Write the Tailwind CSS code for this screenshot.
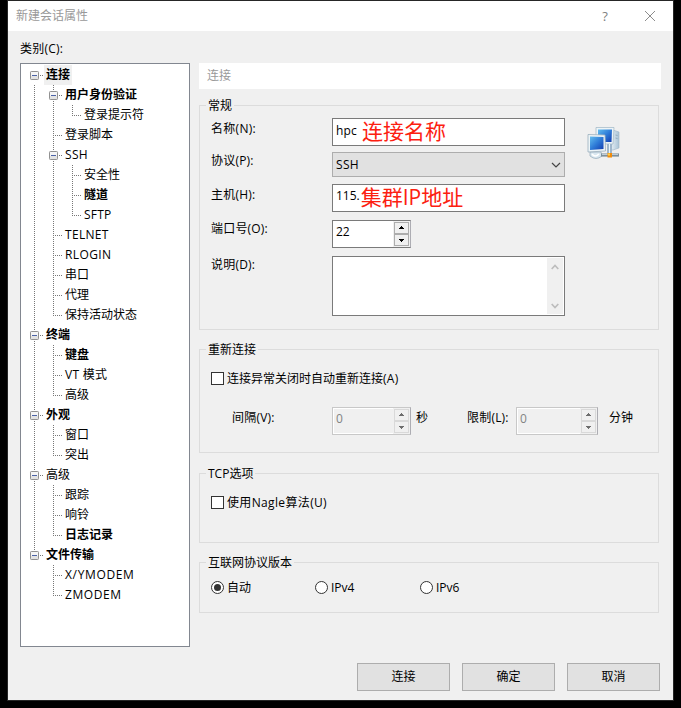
<!DOCTYPE html>
<html lang="zh-CN">
<head>
<meta charset="utf-8">
<title>新建会话属性</title>
<script src="https://cdn.jsdelivr.net/npm/@tailwindcss/browser@4"></script>
</head>
<body class="w-[681px] h-[708px] overflow-hidden bg-black pl-[7px] font-['Open_Sans','Noto_Sans_CJK_SC',sans-serif] text-[12px] leading-4 text-black">

<svg width="0" height="0" class="absolute">
  <defs>
    <g id="v"><path d="M7.5 0V20" stroke="#777" stroke-dasharray="1 1"/></g>
    <g id="t"><path d="M7.5 0V20M9 10.500H17" stroke="#777" stroke-dasharray="1 1"/></g>
    <g id="l"><path d="M7.5 0V11M9 10.500H17" stroke="#777" stroke-dasharray="1 1"/></g>
    <g id="box">
      <path d="M13 10.500H17" stroke="#777" stroke-dasharray="1 1"/>
      <rect x="3.500" y="6.500" width="8" height="8" rx=".8" fill="#f5f5f5" stroke="#919191"/>
      <rect x="4" y="11" width="7" height="3" fill="#e3e3e3"/>
      <path d="M5 10.500H10" stroke="#4b63a7"/>
    </g>
    <g id="up"><path d="M2 5h5v-1h-1v-1h-1v-1h-1v1h-1v1h-1z"/></g>
    <g id="down"><path d="M2 3h5v1h-1v1h-1v1h-1v-1h-1v-1h-1z"/></g>
  </defs>
</svg>

<main class="flex h-[701px] w-[667px] flex-col border border-[#262626] bg-[#f0f0f0]">
  <header class="flex h-[30px] shrink-0 items-center bg-white pl-2 text-[#999]">
    <h1 class="flex-1">新建会话属性</h1>
    <span class="mr-[35px] w-[8px] text-center text-[13px] text-[#808080]">?</span>
    <svg class="mr-[17px]" width="12" height="12" fill="none" stroke="#8c8c8c"><path d="M1 1L11 11M11 1L1 11"/></svg>
  </header>

  <div class="h-[32px] pt-[10px] pl-3 tracking-[0.2px]">类别(C):</div>

  <div class="flex h-[584px] pl-3">
    <nav id="tree" class="w-[170px] shrink-0 border border-[#828790] bg-white pt-px pl-[6px]"></nav>

    <section class="ml-[9px] w-[462px]">
      <div class="flex h-[26px] items-center bg-white pl-2 text-[#999]">连接</div>

      <div class="relative mt-4 flex h-[225px] w-[460px] border border-[#dcdcdc] pt-3 pl-[11px]">
        <span class="absolute -top-[8px] left-[6px] bg-[#f0f0f0] px-[2px]">常规</span>
        <div class="w-[354px]">
          <div class="mb-[6px] flex"><label class="w-[121px] pt-[3px] tracking-[0.3px]">名称(N):</label>
            <div class="flex h-7 w-[233px] items-center border border-[#7a7a7a] bg-white pl-[3px]"><span class="-mt-[3px] tracking-[0.2px]">hpc</span><span class="-mt-[2px] ml-[5px] text-[21px] leading-6 text-[#fc2010]">连接名称</span></div></div>
          <div class="mb-[7px] flex"><label class="w-[121px] pt-px tracking-[0.2px]">协议(P):</label>
            <div class="flex h-[25px] w-[233px] items-center justify-between border border-[#adadad] bg-[#e1e1e1] pr-[3px] pl-[3px]"><span class="tracking-[0.3px]">SSH</span><svg width="10" height="8" fill="none" stroke="#444" stroke-width="1.200"><path d="M1 2L5 6L9 2"/></svg></div></div>
          <div class="mb-2 flex"><label class="w-[121px] pt-[3px] tracking-[0.2px]">主机(H):</label>
            <div class="flex h-7 w-[233px] items-center border border-[#7a7a7a] bg-white pl-[3px]"><span class="-mt-[4px]">115.</span><span class="-mt-[2px] ml-px text-[21px] leading-6 text-[#fc2010]">集群IP地址</span></div></div>
          <div class="mb-2 flex"><label class="w-[121px] pt-px tracking-[0.2px]">端口号(O):</label>
            <div class="flex h-7 w-[79px] border border-[#7a7a7a] border-r-[#adadb3] bg-white pl-[3px]"><span class="flex-1 pt-[3px]">22</span>
              <div class="flex w-[17px] flex-col bg-[#f0f0f0] p-px"><svg class="h-3 w-[15px] border border-[#adadad]" viewBox="-2 -1 13 10"><use href="#up"/></svg><svg class="h-3 w-[15px] border border-[#adadad]" viewBox="-2 -1 13 10"><use href="#down"/></svg></div></div></div>
          <div class="flex"><label class="w-[121px] pt-px tracking-[0.2px]">说明(D):</label>
            <div class="flex h-[60px] w-[233px] justify-end border border-[#7a7a7a] bg-white p-px">
              <div class="flex w-4 flex-col items-center justify-between bg-[#f0f0f0] pt-[5px] pb-[4px]"><svg width="8" height="8" fill="none" stroke="#bdbdbd" stroke-width="1.700"><path d="M.7 6L4 2.500L7.300 6"/></svg><svg width="8" height="8" fill="none" stroke="#bdbdbd" stroke-width="1.700"><path d="M.7 2L4 5.500L7.300 2"/></svg></div></div></div>
        </div>
        <svg class="mt-[8px] ml-[22px]" width="33" height="34" viewBox="0 0 33 34">
          <defs><linearGradient id="scr" x1="0" y1="0" x2="1" y2="1"><stop offset="0" stop-color="#62bdee"/><stop offset=".5" stop-color="#2f7cd8"/><stop offset="1" stop-color="#123cae"/></linearGradient>
          <linearGradient id="tower" x2="1"><stop stop-color="#f4f9fc"/><stop offset="1" stop-color="#a9c3d6"/></linearGradient></defs>
          <path d="M26 4L32 6V22L26 24H22V4Z" fill="url(#tower)" stroke="#9fb7c8" stroke-width=".6"/>
          <path d="M28.500 9l2 .5M28.500 12l2 .5" stroke="#8299aa" stroke-width=".7"/>
          <path d="M9 1.500H27L26 18H9Z" fill="#edf4f7" stroke="#9fb6c4" stroke-width=".7"/>
          <path d="M11 3.500H25L24.500 16H11Z" fill="url(#scr)"/>
          <path d="M20 18h5v9h-5z" fill="#9fb6cb"/><path d="M22.500 18v9" stroke="#e8f4fc"/>
          <path d="M3 26h11l1 4q-6 5-12 0z" fill="#d9e7f0" stroke="#92a8b8" stroke-width=".7"/>
          <path d="M5 28q3 4 7 0" fill="none" stroke="#fff" stroke-width="1.500"/>
          <path d="M1 8.500L18 9L18.500 25L1 26Z" fill="#edf4f7" stroke="#9aafbd" stroke-width=".8"/>
          <path d="M3 10.500L16.500 11V23L3 24Z" fill="url(#scr)"/>
          <path d="M14 29H32" stroke="#7d8f9c" stroke-width="3.200"/><path d="M15 28.300H31" stroke="#d1dde5"/>
          <rect x="20.500" y="27" width="4.500" height="4.500" fill="#f28c0c"/><rect x="21" y="27.500" width="2" height="2" fill="#ffd24a"/>
        </svg>
      </div>

      <div class="relative mt-[19px] h-[104px] w-[460px] border border-[#dcdcdc] pt-[21px] pl-[11px]">
        <span class="absolute -top-[8px] left-[6px] bg-[#f0f0f0] px-[2px]">重新连接</span>
        <div class="flex h-4 items-start"><i class="mt-px mr-[3px] size-[13px] border border-[#333] bg-white"></i>连接异常关闭时自动重新连接<span class="tracking-[0.3px]">(A)</span></div>
        <div class="mt-[20px] flex pl-[21px]">
          <label class="w-[100px] pt-[3px] tracking-[0.2px]">间隔(V):</label>
          <div class="flex h-7 w-[79px] border border-[#c8c8c8] border-r-[#adadb3] pl-[3px] text-[#838383] shadow-[inset_0_0_0_1px_white]"><span class="flex-1 pt-[3px]">0</span>
            <div class="flex w-[17px] flex-col bg-[#f0f0f0] p-px"><svg class="h-3 w-[15px] border border-[#d9d9d9]" viewBox="-2 -1 13 10" fill="#6d6d6d"><use href="#up"/></svg><svg class="h-3 w-[15px] border border-[#d9d9d9]" viewBox="-2 -1 13 10" fill="#6d6d6d"><use href="#down"/></svg></div></div>
          <span class="ml-[5px] w-[51px] pt-[3px]">秒</span>
          <label class="w-[49px] pt-[3px] tracking-[0.2px]">限制(L):</label>
          <div class="flex h-7 w-[82px] border border-[#c8c8c8] border-r-[#adadb3] pl-[3px] text-[#838383] shadow-[inset_0_0_0_1px_white]"><span class="flex-1 pt-[3px]">0</span>
            <div class="flex w-[17px] flex-col bg-[#f0f0f0] p-px"><svg class="h-3 w-[15px] border border-[#d9d9d9]" viewBox="-2 -1 13 10" fill="#6d6d6d"><use href="#up"/></svg><svg class="h-3 w-[15px] border border-[#d9d9d9]" viewBox="-2 -1 13 10" fill="#6d6d6d"><use href="#down"/></svg></div></div>
          <span class="ml-[11px] pt-[3px]">分钟</span>
        </div>
      </div>

      <div class="relative mt-5 h-[70px] w-[460px] border border-[#dcdcdc] pt-[21px] pl-[11px]">
        <span class="absolute -top-[8px] left-[6px] bg-[#f0f0f0] px-[2px]">TCP选项</span>
        <div class="flex h-4 items-start tracking-[0.35px]"><i class="mt-px mr-[3px] size-[13px] border border-[#333] bg-white"></i>使用Nagle算法(U)</div>
      </div>

      <div class="relative mt-[19px] h-[51px] w-[460px] border border-[#dcdcdc] pt-[17px] pl-[11px]">
        <span class="absolute -top-[8px] left-[6px] bg-[#f0f0f0] px-[2px]">互联网协议版本</span>
        <div class="flex h-4">
          <div class="flex w-[104px] items-start"><i class="mt-px mr-[3px] flex size-[13px] items-center justify-center rounded-full border border-[#333] bg-white"><b class="size-[7px] rounded-full bg-[#333]"></b></i>自动</div>
          <div class="flex w-[105px] items-start"><i class="mt-px mr-[3px] size-[13px] rounded-full border border-[#333] bg-white"></i>IPv4</div>
          <div class="flex items-start"><i class="mt-px mr-[3px] size-[13px] rounded-full border border-[#333] bg-white"></i>IPv6</div>
        </div>
      </div>
    </section>
  </div>

  <footer class="mt-4 flex justify-end gap-3 pr-[13px]">
    <button class="h-7 w-[93px] border border-[#adadad] bg-[#e1e1e1]">连接</button>
    <button class="h-7 w-[93px] border border-[#adadad] bg-[#e1e1e1]">确定</button>
    <button class="h-7 w-[93px] border border-[#adadad] bg-[#e1e1e1]">取消</button>
  </footer>
</main>

<script>
// Each row: guide cells (comma-separated symbols, '+' stacks), label, bold flag, optional tracking class
const rows = [
  ['box', '连接', 1], ['v,v+box', '用户身份验证', 1], ['v,v,l', '登录提示符', 0], ['v,t', '登录脚本', 0],
  ['v,v+box', 'SSH', 0, 'tracking-[0.3px]'], ['v,v,t', '安全性', 0], ['v,v,t', '隧道', 1], ['v,v,l', 'SFTP', 0, 'tracking-[0.2px]'],
  ['v,t', 'TELNET', 0, 'tracking-[0.3px]'], ['v,t', 'RLOGIN', 0, 'tracking-[0.4px]'], ['v,t', '串口', 0], ['v,t', '代理', 0], ['v,l', '保持活动状态', 0],
  ['v+box', '终端', 1], ['v,t', '键盘', 1], ['v,t', 'VT 模式', 0, 'tracking-[0.3px]'], ['v,l', '高级', 0],
  ['v+box', '外观', 1], ['v,t', '窗口', 0], ['v,l', '突出', 0],
  ['v+box', '高级', 0], ['v,t', '跟踪', 0], ['v,t', '响铃', 0], ['v,l', '日志记录', 1],
  ['box', '文件传输', 1], [' ,t', 'X/YMODEM', 0, 'tracking-[0.65px]'], [' ,l', 'ZMODEM', 0, 'tracking-[0.6px]']
];
const lastRoot = 24;
const cell = c => {
  const parts = c.trim() ? c.split('+') : [];
  return '<svg class="shrink-0" width="19" height="20">' + parts.map(p => '<use href="#' + p + '"/>').join('') + '</svg>';
};
document.getElementById('tree').innerHTML = rows.map(([guides, label, bold, tracking = ''], i) => {
  const svg = i === lastRoot
    ? '<svg class="shrink-0" width="19" height="20"><path d="M7.5 0V6" stroke="#777" stroke-dasharray="1 1"/><use href="#box"/></svg>'
    : guides.split(',').map(cell).join('');
  const style = i === 0 ? 'h-5 bg-[#f0f0f0] pt-[2px] pr-[2px] pl-[2px] -ml-[2px] font-bold' : bold ? 'h-5 pt-[2px] font-bold' : 'h-5 pt-[2px]';
  return '<div class="flex h-5 whitespace-nowrap">' + svg + '<span class="' + style + ' ' + tracking + '">' + label + '</span></div>';
}).join('');
</script>
</body>
</html>
